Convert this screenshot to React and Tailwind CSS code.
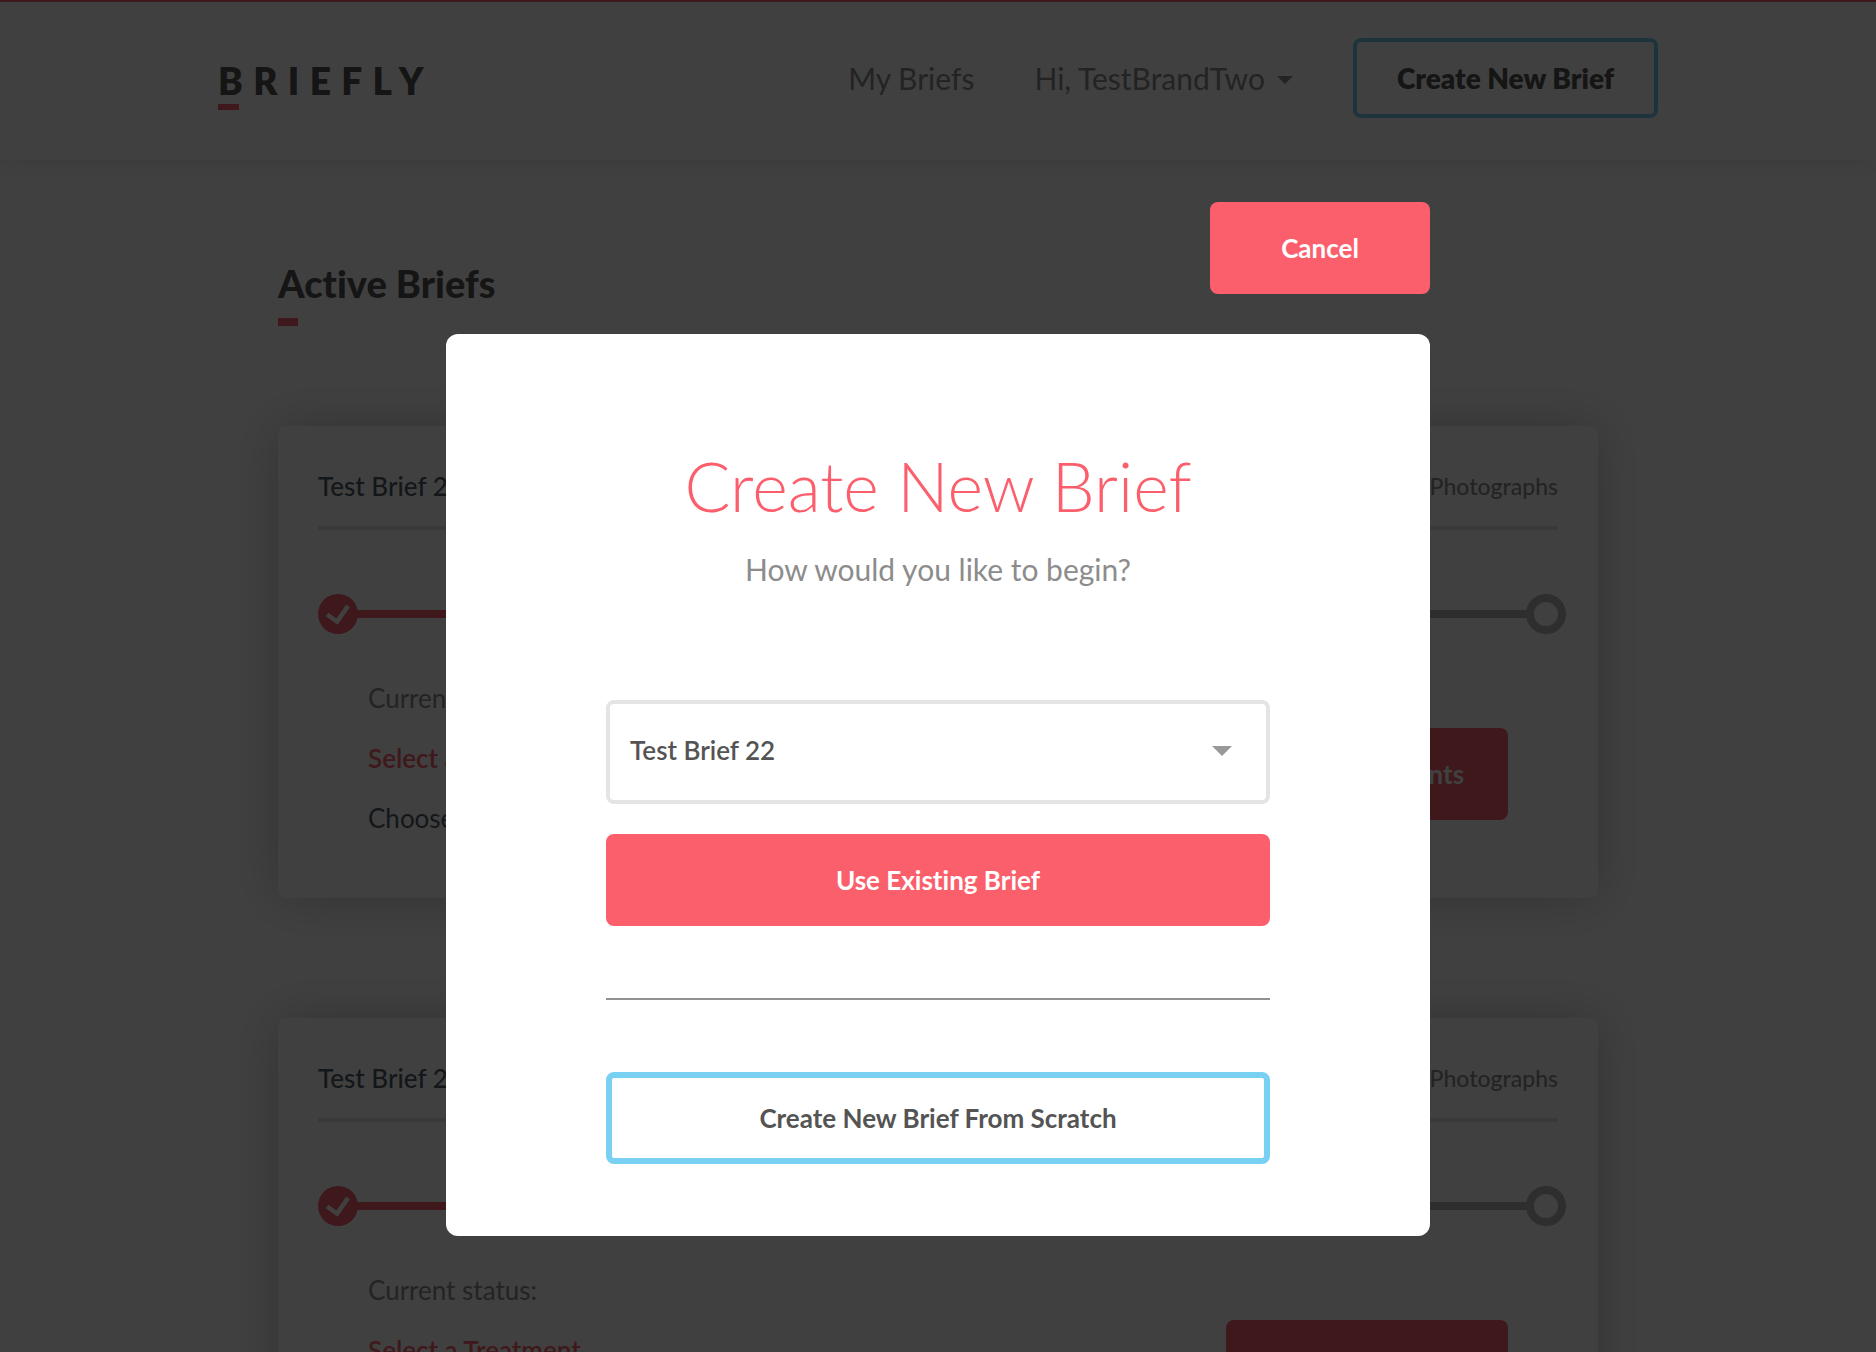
import React from "react";

const briefs = [
  { id: 1, title: "Test Brief 22" },
  { id: 2, title: "Test Brief 21" },
];

function Logo() {
  return (
    <a href="#home" className="mt-3 block text-[#545454]">
      <span className="block text-[37px] leading-[46px] font-extrabold tracking-[0.28em]">BRIEFLY</span>
      <span className="block h-[6px] w-[21px] bg-[#fc5f6c]" />
    </a>
  );
}

function Header() {
  return (
    <header className="h-[160px] border-t-2 border-[#fc5f6c] bg-white shadow-[0_2px_24px_rgba(0,0,0,0.1)]">
      <div className="mx-auto flex max-w-[1440px] items-center justify-between pt-9">
        <Logo />
        <nav className="flex items-center gap-[60px] text-[30px] leading-10 text-[#8c8c8c]">
          <a href="#briefs">My Briefs</a>
          <button type="button" className="flex items-center gap-3">
            Hi, TestBrandTwo
            <svg viewBox="0 0 16 8" className="mt-1 h-2 w-4" fill="currentColor" aria-hidden="true">
              <path d="M0 0h16L8 8z" />
            </svg>
          </button>
          <button
            type="button"
            className="h-20 rounded-lg border-4 border-[#78d0f2] px-10 text-[28px] font-extrabold text-[#545454]"
          >
            Create New Brief
          </button>
        </nav>
      </div>
    </header>
  );
}

function Stepper() {
  return (
    <div className="mt-16 -mr-2 flex items-center">
      <svg viewBox="0 0 40 40" className="h-10 w-10 shrink-0" aria-hidden="true">
        <circle cx="20" cy="20" r="20" fill="#fc5f6c" />
        <path d="M9 20.500l10 7L30 12" fill="none" stroke="#fff" strokeWidth="4.500" />
      </svg>
      <span className="-ml-1 h-2 flex-1 bg-[#fc5f6c]" />
      <span className="h-2 flex-1 bg-[#b8b8b8]" />
      <span className="-ml-1 h-10 w-10 shrink-0 rounded-full border-8 border-[#b8b8b8]" />
    </div>
  );
}

function BriefCard({ title }) {
  return (
    <article className="rounded-lg bg-white px-10 pt-10 pb-[50px] text-[26px] shadow-[0_0_50px_rgba(0,0,0,0.22)]">
      <div className="flex items-center justify-between border-b-4 border-[#e4e4e4] pb-5 leading-10">
        <h2 className="font-medium text-[#4c5e6a]">{title}</h2>
        <span className="text-[23px] leading-10 font-medium text-[#8c8c8c]">Photographs</span>
      </div>
      <Stepper />
      <div className="mt-[34px] flex items-start justify-between px-[50px] leading-[60px]">
        <div>
          <p className="text-[#8c8c8c]">Current status:</p>
          <p className="font-semibold text-[#fc5f6c]">Select a Treatment</p>
          <p className="text-[#4c5e6a]">Choose a treatment</p>
        </div>
        <button
          type="button"
          className="mt-[60px] h-[92px] min-w-[282px] rounded-lg bg-[#fc5f6c] px-10 leading-10 font-bold text-white"
        >
          View Treatments
        </button>
      </div>
    </article>
  );
}

function CreateBriefDialog() {
  return (
    <div className="fixed inset-0 overflow-hidden bg-black/75 px-6 pt-[202px]">
      <div className="mx-auto flex max-w-[984px] flex-col items-end gap-10 text-[26px] leading-10 font-bold">
        <button type="button" className="h-[92px] w-[220px] rounded-lg bg-[#fc5f6c] text-white">
          Cancel
        </button>
        <section
          role="dialog"
          aria-modal="true"
          aria-labelledby="dialog-title"
          className="flex w-full flex-col rounded-xl bg-white px-40 pt-[110px] pb-[72px] text-center"
        >
          <h1 id="dialog-title" className="text-[68px] leading-[84px] font-light text-[#fc5f6c]">
            Create New Brief
          </h1>
          <p className="mt-[21px] text-[30px] leading-10 font-normal text-[#8c8c8c]">How would you like to begin?</p>
          <div className="relative mt-[111px]">
            <select
              aria-label="Existing brief"
              className="h-[104px] w-full appearance-none rounded-lg border-4 border-[#e4e4e4] bg-white px-5 pb-1 font-semibold text-[#545454]"
            >
              <option>Test Brief 22</option>
              <option>Test Brief 21</option>
            </select>
            <svg
              viewBox="0 0 20 10"
              className="pointer-events-none absolute top-[46px] right-[38px] h-[10px] w-5"
              fill="#999"
              aria-hidden="true"
            >
              <path d="M0 0h20L10 10z" />
            </svg>
          </div>
          <button type="button" className="mt-[30px] h-[92px] rounded-lg bg-[#fc5f6c] text-white">
            Use Existing Brief
          </button>
          <hr className="my-[72px] border-t-2 border-[#919191]" />
          <button type="button" className="h-[92px] rounded-lg border-[6px] border-[#78d0f2] bg-white text-[#545454]">
            Create New Brief From Scratch
          </button>
        </section>
      </div>
    </div>
  );
}

export default function App() {
  return (
    <div className="h-screen overflow-hidden bg-white font-['Lato',sans-serif] [font-variant-ligatures:none]">
      <Header />
      <main className="mx-auto max-w-[1320px] pt-[98px]">
        <h1 className="text-[38px] leading-[50px] font-black text-[#545454]">Active Briefs</h1>
        <span className="mt-[10px] block h-2 w-5 bg-[#fc5f6c]" />
        <div className="mt-[100px] flex flex-col gap-[120px]">
          {briefs.map((b) => (
            <BriefCard key={b.id} title={b.title} />
          ))}
        </div>
      </main>
      <CreateBriefDialog />
    </div>
  );
}
